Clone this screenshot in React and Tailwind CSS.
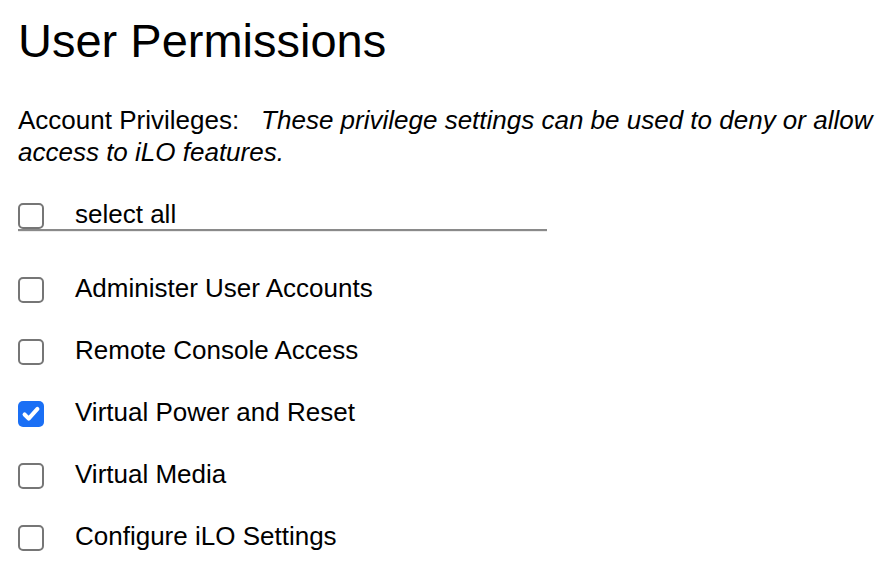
import React, { useState } from 'react';

const permissions = [
    { id: 'admin', label: 'Administer User Accounts', checked: false },
    { id: 'console', label: 'Remote Console Access', checked: false },
    { id: 'power', label: 'Virtual Power and Reset', checked: true },
    { id: 'media', label: 'Virtual Media', checked: false },
    { id: 'config', label: 'Configure iLO Settings', checked: false },
];

function Box({ checked, onClick }) {
    return (
        <button
            type="button"
            onClick={onClick}
            className={`flex h-[26px] w-[26px] shrink-0 items-center justify-center rounded-[5px] ${
                checked ? 'bg-[#1a6ff5]' : 'border-2 border-[#767676] bg-white'
            }`}
        >
            {checked && (
                <svg viewBox="0 0 24 24" className="h-[22px] w-[22px]" fill="none">
                    <path d="M5 12.5l4.5 4.5L19 6.5" stroke="white" strokeWidth="4.4" strokeLinecap="round" strokeLinejoin="round" />
                </svg>
            )}
        </button>
    );
}

export default function App() {
    const [items, setItems] = useState(permissions);
    const allChecked = items.every((p) => p.checked);

    const toggle = (id) => {
        setItems(items.map((p) => (p.id === id ? { ...p, checked: !p.checked } : p)));
    };

    return (
        <div className="min-h-screen bg-white pl-[18px] pr-[12px] font-['Liberation_Sans',Arial,sans-serif] text-black">
            {/* Title */}
            <h1 className="pt-[17px] text-[47px] leading-none">User Permissions</h1>

            {/* Description */}
            <p className="mt-[40px] text-[26px] leading-[32px]">
                <span className="mr-[22px]">Account Privileges:</span>
                <em>These privilege settings can be used to deny or allow access to iLO features.</em>
            </p>

            {/* Select all */}
            <div className="mt-[35px] flex w-[529px] items-center gap-[31px] border-b-2 border-[#8a8a8a] shadow-[0_1px_0_#ececec]">
                <Box
                    checked={allChecked}
                    onClick={() => setItems(items.map((p) => ({ ...p, checked: !allChecked })))}
                />
                <span className="-mt-[4px] text-[26px] leading-[30px]">select all</span>
            </div>

            {/* Permission list */}
            <div className="mt-[28px] flex flex-col">
                {items.map((p) => (
                    <div key={p.id} className="flex h-[62px] items-center gap-[31px]">
                        <Box checked={p.checked} onClick={() => toggle(p.id)} />
                        <span className="-mt-[4px] text-[26px] leading-[30px]">{p.label}</span>
                    </div>
                ))}
            </div>
        </div>
    );
}
